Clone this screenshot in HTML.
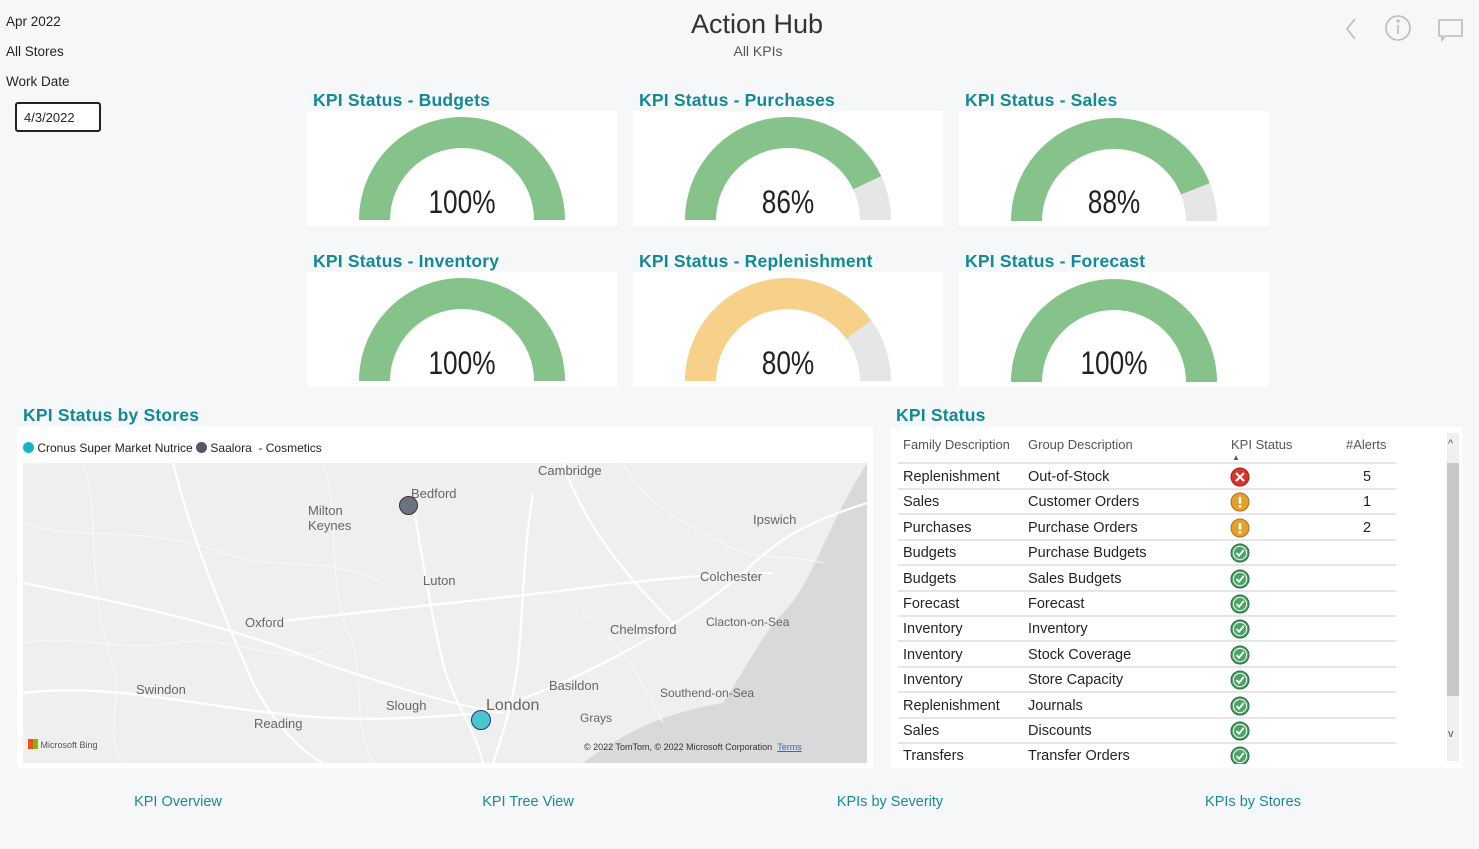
<!DOCTYPE html>
<html><head><meta charset="utf-8"><style>
*{margin:0;padding:0;box-sizing:border-box}
body{width:1479px;height:849px;background:#f6f7f9;font-family:"Liberation Sans",sans-serif;position:relative;overflow:hidden;color:#252423}
.a{position:absolute}
.t{color:#118a96;font-size:17.5px;white-space:nowrap;font-weight:bold;letter-spacing:0.2px}
.card{position:absolute;background:#fff;width:310px;height:115px}
.pct{position:absolute;left:0;width:310px;text-align:center;top:73px;font-family:"Liberation Sans",sans-serif;font-size:32px;color:#222;transform:scaleX(0.82)}
.row{position:absolute;left:898px;width:498px;height:25px;border-bottom:2px solid #e6e6e6;font-size:14.5px}
.row span{position:absolute;top:4px}
.lnk{position:absolute;top:794px;color:#1a8a96;font-size:14.5px;transform:translateX(-50%)}
.ml{position:absolute;font-size:13px;color:#666}
</style></head><body>
<div class="a" style="left:6px;top:14px;font-size:13.5px">Apr 2022</div>
<div class="a" style="left:6px;top:44px;font-size:13.5px">All Stores</div>
<div class="a" style="left:6px;top:74px;font-size:13.5px">Work Date</div>
<div class="a" style="left:15px;top:102px;width:86px;height:30px;border:2px solid #222;border-radius:3px;background:#fff;font-size:13px;padding:6px 0 0 7px">4/3/2022</div>
<div class="a" style="left:0;width:1514px;top:9px;text-align:center;font-size:27px;color:#333">Action Hub</div>
<div class="a" style="left:0;width:1516px;top:43px;text-align:center;font-size:14px;color:#555">All KPIs</div>
<svg class="a" style="left:1335px;top:12px" width="130" height="36" fill="none" stroke="#bbb" stroke-width="1.6">
<path d="M20 7 L12 17 L20 27"/><circle cx="63" cy="16" r="12"/><line x1="63" y1="13" x2="63" y2="22"/><circle cx="63" cy="9" r=".8" fill="#bbb"/>
<path d="M104 8 H127 V24 H110 L107 28 V24 H104 Z"/></svg>

<div class="t a" style="left:313px;top:90px">KPI Status - Budgets</div>
<div class="t a" style="left:639px;top:90px">KPI Status - Purchases</div>
<div class="t a" style="left:965px;top:90px">KPI Status - Sales</div>
<div class="t a" style="left:313px;top:251px">KPI Status - Inventory</div>
<div class="t a" style="left:639px;top:251px">KPI Status - Replenishment</div>
<div class="t a" style="left:965px;top:251px">KPI Status - Forecast</div>

<div class="card" style="left:307px;top:111px"><svg width="310" height="115"><path d="M52 109A103 103 0 0 1 258 109L227 109A72 72 0 0 0 83 109Z" fill="#86c38a"/></svg><div class="pct">100%</div></div>
<div class="card" style="left:633px;top:111px"><svg width="310" height="115"><path d="M52 109A103 103 0 0 1 258 109L227 109A72 72 0 0 0 83 109Z" fill="#e6e6e6"/><path d="M52 109A103 103 0 0 1 248.2 65.1L220.2 78.3A72 72 0 0 0 83 109Z" fill="#86c38a"/></svg><div class="pct">86%</div></div>
<div class="card" style="left:959px;top:111px"><svg width="310" height="115"><path d="M52 110A103 103 0 0 1 258 110L227 110A72 72 0 0 0 83 110Z" fill="#e6e6e6"/><path d="M52 110A103 103 0 0 1 250.8 72.1L222 83.5A72 72 0 0 0 83 110Z" fill="#86c38a"/></svg><div class="pct">88%</div></div>
<div class="card" style="left:307px;top:272px"><svg width="310" height="115"><path d="M52 109A103 103 0 0 1 258 109L227 109A72 72 0 0 0 83 109Z" fill="#86c38a"/></svg><div class="pct">100%</div></div>
<div class="card" style="left:633px;top:272px"><svg width="310" height="115"><path d="M52 109A103 103 0 0 1 258 109L227 109A72 72 0 0 0 83 109Z" fill="#e6e6e6"/><path d="M52 109A103 103 0 0 1 238.3 48.4L213.2 66.7A72 72 0 0 0 83 109Z" fill="#f7d08a"/></svg><div class="pct">80%</div></div>
<div class="card" style="left:959px;top:272px"><svg width="310" height="115"><path d="M52 110A103 103 0 0 1 258 110L227 110A72 72 0 0 0 83 110Z" fill="#86c38a"/></svg><div class="pct">100%</div></div>

<div class="t a" style="left:23px;top:405px">KPI Status by Stores</div>
<div class="a" style="left:17px;top:427px;width:856px;height:341px;background:#fff"></div>
<div class="a" style="left:23px;top:441px;font-size:12px;white-space:nowrap"><span style="display:inline-block;width:11px;height:11px;border-radius:50%;background:#14b6c6;vertical-align:-1px"></span> Cronus Super Market Nutrice <span style="display:inline-block;width:11px;height:11px;border-radius:50%;background:#505a68;vertical-align:-1px"></span> Saalora &nbsp;- Cosmetics</div>
<div class="a" style="left:23px;top:463px;width:844px;height:300px;background:#efefef;overflow:hidden">
<svg width="844" height="300" class="a" style="left:0;top:0">
<path d="M844 0 V300 H560 C600 270 640 250 700 240 C720 210 740 170 760 150 C790 120 800 70 844 0Z" fill="#d9d9d9"/>
<g fill="none" stroke="#fff" stroke-width="2.2">
<path d="M0 120 C100 140 200 160 300 200 C360 220 420 240 480 250"/>
<path d="M150 0 C170 80 200 150 230 220 C250 260 280 290 300 300"/>
<path d="M390 40 C400 100 410 160 420 200 C430 240 450 260 460 300"/>
<path d="M510 30 C500 90 500 150 495 200 C490 240 480 270 470 300"/>
<path d="M460 250 C550 220 650 170 720 110 C750 80 780 60 844 40"/>
<path d="M0 230 C80 220 160 240 250 250 C330 260 400 255 460 250"/>
<path d="M240 160 C330 150 420 140 520 130 C600 120 680 110 750 110"/>
<path d="M540 0 C560 60 600 110 650 160"/>
</g>
<g fill="none" stroke="#fafafa" stroke-width="1">
<path d="M0 60 C60 80 120 60 200 90 C260 110 300 90 360 120"/>
<path d="M60 0 C80 60 60 120 90 200 C100 240 80 270 100 300"/>
<path d="M300 0 C320 60 300 120 330 180 C340 220 330 260 350 300"/>
<path d="M600 0 C620 40 660 60 700 80 C730 100 760 90 800 100"/>
<path d="M560 150 C600 180 620 220 640 260"/>
<path d="M0 180 C50 170 100 190 150 180 C200 170 250 200 300 190"/>
</g></svg>
<div class="ml" style="left:515px;top:0">Cambridge</div>
<div class="ml" style="left:388px;top:23px">Bedford</div>
<div class="ml" style="left:285px;top:40px;line-height:15px">Milton<br>Keynes</div>
<div class="ml" style="left:730px;top:49px">Ipswich</div>
<div class="ml" style="left:400px;top:110px">Luton</div>
<div class="ml" style="left:677px;top:106px">Colchester</div>
<div class="ml" style="left:222px;top:152px">Oxford</div>
<div class="ml" style="left:587px;top:159px">Chelmsford</div>
<div class="ml" style="left:683px;top:152px;font-size:12px">Clacton-on-Sea</div>
<div class="ml" style="left:526px;top:215px">Basildon</div>
<div class="ml" style="left:637px;top:223px;font-size:12px">Southend-on-Sea</div>
<div class="ml" style="left:113px;top:219px">Swindon</div>
<div class="ml" style="left:363px;top:235px">Slough</div>
<div class="ml" style="left:463px;top:234px;font-size:16px">London</div>
<div class="ml" style="left:557px;top:248px;font-size:12px">Grays</div>
<div class="ml" style="left:231px;top:253px">Reading</div>
<div class="ml" style="left:5px;top:276px;font-size:9px;color:#555"><span style="display:inline-block;width:10px;height:10px;background:linear-gradient(90deg,#f25022 50%,#7fba00 50%);vertical-align:-1px"></span> Microsoft Bing</div>
<div class="ml" style="left:561px;top:279px;font-size:9px;color:#333">© 2022 TomTom, © 2022 Microsoft Corporation &nbsp;<u style="color:#36c">Terms</u></div>
<div class="a" style="left:376px;top:33px;width:19px;height:19px;border-radius:50%;background:#6b7280;border:1px solid #333"></div>
<div class="a" style="left:448px;top:247px;width:20px;height:20px;border-radius:50%;background:#49c6d0;border:1px solid #237"></div>
</div>

<div class="t a" style="left:896px;top:405px">KPI Status</div>
<div class="a" style="left:890px;top:427px;width:573px;height:341px;background:#fff"></div>
<div class="a" style="left:1447px;top:433px;width:12px;height:328px;background:#f0f0f0"></div>
<div class="a" style="left:1447px;top:463px;width:12px;height:233px;background:#c8c8c8"></div>
<div class="a" style="left:1448px;top:438px;font-size:11px;color:#555">^</div>
<div class="a" style="left:1448px;top:728px;font-size:11px;color:#555">v</div>
<div class="a" style="left:898px;top:436px;width:498px;height:28px;border-bottom:2px solid #e6e6e6;font-size:13px;color:#555">
<span class="a" style="left:5px;top:1px">Family Description</span><span class="a" style="left:130px;top:1px">Group Description</span><span class="a" style="left:333px;top:1px">KPI Status</span><span class="a" style="left:448px;top:1px">#Alerts</span><span class="a" style="left:334px;top:17px;font-size:8px">▲</span></div>
<div id="rows"></div>
<div class="lnk" style="left:178px">KPI Overview</div>
<div class="lnk" style="left:528px">KPI Tree View</div>
<div class="lnk" style="left:890px">KPIs by Severity</div>
<div class="lnk" style="left:1253px">KPIs by Stores</div>
<script>
var d=[["Replenishment","Out-of-Stock","x","5"],["Sales","Customer Orders","!","1"],["Purchases","Purchase Orders","!","2"],["Budgets","Purchase Budgets","v",""],["Budgets","Sales Budgets","v",""],["Forecast","Forecast","v",""],["Inventory","Inventory","v",""],["Inventory","Stock Coverage","v",""],["Inventory","Store Capacity","v",""],["Replenishment","Journals","v",""],["Sales","Discounts","v",""],["Transfers","Transfer Orders","v",""]];
var h="";d.forEach(function(r,i){var t=465+i*25.4;var ic;
if(r[2]=="x")ic='<circle cx="10" cy="10" r="9" fill="#d9342b" stroke="#a51d16"/><path d="M6 6L14 14M14 6L6 14" stroke="#fff" stroke-width="2.2"/>';
else if(r[2]=="!")ic='<circle cx="10" cy="10" r="9" fill="#e3a02b" stroke="#a8701a"/><path d="M10 5V11.5" stroke="#fff" stroke-width="2.6"/><circle cx="10" cy="14.5" r="1.4" fill="#fff"/>';
else ic='<circle cx="10" cy="10" r="9" fill="#4aa564" stroke="#2b6b3c"/><circle cx="10" cy="10" r="6.6" fill="none" stroke="#fff" stroke-width="1"/><path d="M6.5 10L9 12.7L13.7 7" fill="none" stroke="#fff" stroke-width="1.8"/>';
h+='<div class="row" style="top:'+t+'px'+(i==11?';border:none;height:20px;overflow:hidden':'')+'"><span style="left:5px">'+r[0]+'</span><span style="left:130px">'+r[1]+'</span><svg class="a" style="left:332px;top:2px" width="20" height="20">'+ic+'</svg><span style="left:465px;width:8px;text-align:right">'+r[3]+'</span></div>';});
document.getElementById("rows").innerHTML=h;
</script>
</body></html>
